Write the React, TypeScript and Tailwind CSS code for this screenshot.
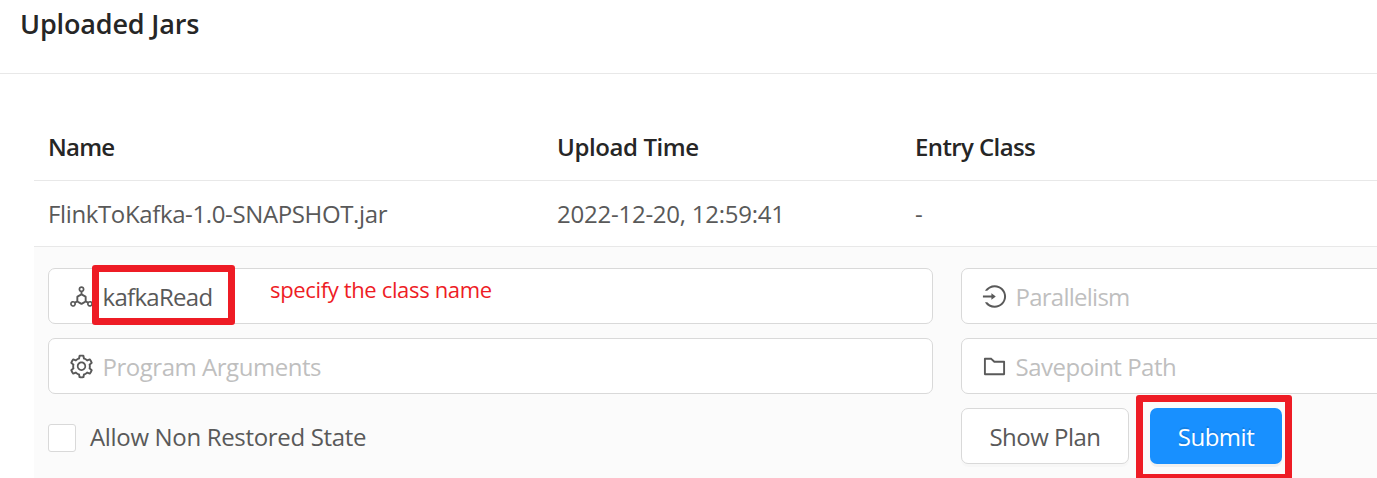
import type { ReactNode } from "react";
import {
  AiOutlineDeploymentUnit,
  AiOutlineFolder,
  AiOutlineLogin,
  AiOutlineSetting,
} from "react-icons/ai";

function Field({ icon, children, muted }: { icon: ReactNode; children: ReactNode; muted?: boolean }) {
  return (
    <div className="flex h-14 items-center rounded-[7px] border border-[#d9d9d9] bg-white pl-[19px]">
      <span className="mr-[7.5px] text-[27px] text-[#595959]">{icon}</span>
      <span className={muted ? "pt-[2px] text-[#bfbfbf]" : "pt-[2px] text-[#595959]"}>{children}</span>
    </div>
  );
}

export default function App() {
  return (
    <div className="relative h-[478px] w-[1377px] overflow-hidden whitespace-nowrap bg-white font-['Open_Sans',sans-serif] text-[24px] leading-8 text-[#595959]">
      <header className="h-[74px] border-b border-[#e8e8e8] pl-5 pt-[8px]">
        <h1 className="text-[27px] font-semibold leading-8 tracking-[-0.15px] text-[#262626]">Uploaded Jars</h1>
      </header>

      <main className="ml-[34px] pt-10">
        <div className="grid h-[67px] grid-cols-[509px_358px_1fr] items-center border-b border-[#e8e8e8] pl-[14px] font-semibold text-[#262626]">
          <span className="tracking-[-0.75px]">Name</span>
          <span className="tracking-[-0.4px]">Upload Time</span>
          <span className="tracking-[-0.6px]">Entry Class</span>
        </div>
        <div className="grid h-[66px] grid-cols-[509px_358px_1fr] items-center border-b border-[#e8e8e8] pl-[14px]">
          <span className="tracking-[-0.37px]">FlinkToKafka-1.0-SNAPSHOT.jar</span>
          <span className="tracking-[-0.24px]">2022-12-20, 12:59:41</span>
          <span>-</span>
        </div>

        <section className="grid h-[231px] grid-cols-[885px_885px] content-start gap-x-7 gap-y-[14px] bg-[#fbfbfb] pl-[14px] pt-[21px]">
          <Field icon={<AiOutlineDeploymentUnit />}>
            <span className="tracking-[-0.7px]">kafkaRead</span>
          </Field>
          <Field icon={<AiOutlineLogin />} muted>
            <span className="tracking-[-0.75px]">Parallelism</span>
          </Field>
          <Field icon={<AiOutlineSetting />} muted>
            <span className="tracking-[-0.47px]">Program Arguments</span>
          </Field>
          <Field icon={<AiOutlineFolder />} muted>
            <span className="tracking-[-0.5px]">Savepoint Path</span>
          </Field>
          <label className="flex h-14 items-center pt-[3px]">
            <span className="mr-[14px] size-7 rounded-[3px] border border-[#d9d9d9] bg-white" />
            <span className="pb-[2px] tracking-[-0.33px]">Allow Non Restored State</span>
          </label>
          <div className="flex gap-[21px]">
            <button className="h-14 w-[168px] rounded-[7px] border border-[#d9d9d9] bg-white pt-[2px] shadow-[0_3px_0_rgba(0,0,0,0.016)]">
              <span className="tracking-[-0.5px]">Show Plan</span>
            </button>
            <button className="h-14 w-[132px] rounded-[7px] bg-[#1890ff] pt-[2px] text-white shadow-[0_3px_0_rgba(0,0,0,0.045)] [text-shadow:0_-2px_0_rgba(0,0,0,0.12)]">
              <span className="tracking-[-0.5px]">Submit</span>
            </button>
          </div>
        </section>
      </main>

      <div className="absolute left-[92px] top-[265px] h-[60px] w-[143px] rounded-[3px] border-[7px] border-[#ee1c25]" />
      <div className="absolute left-[1136px] top-[395px] h-[86px] w-[156px] rounded-[3px] border-[7px] border-[#ee1c25]" />
      <span className="absolute left-[270px] top-[273px] text-[22px] tracking-[-0.35px] text-[#ee1c25]">specify the class name</span>
    </div>
  );
}
